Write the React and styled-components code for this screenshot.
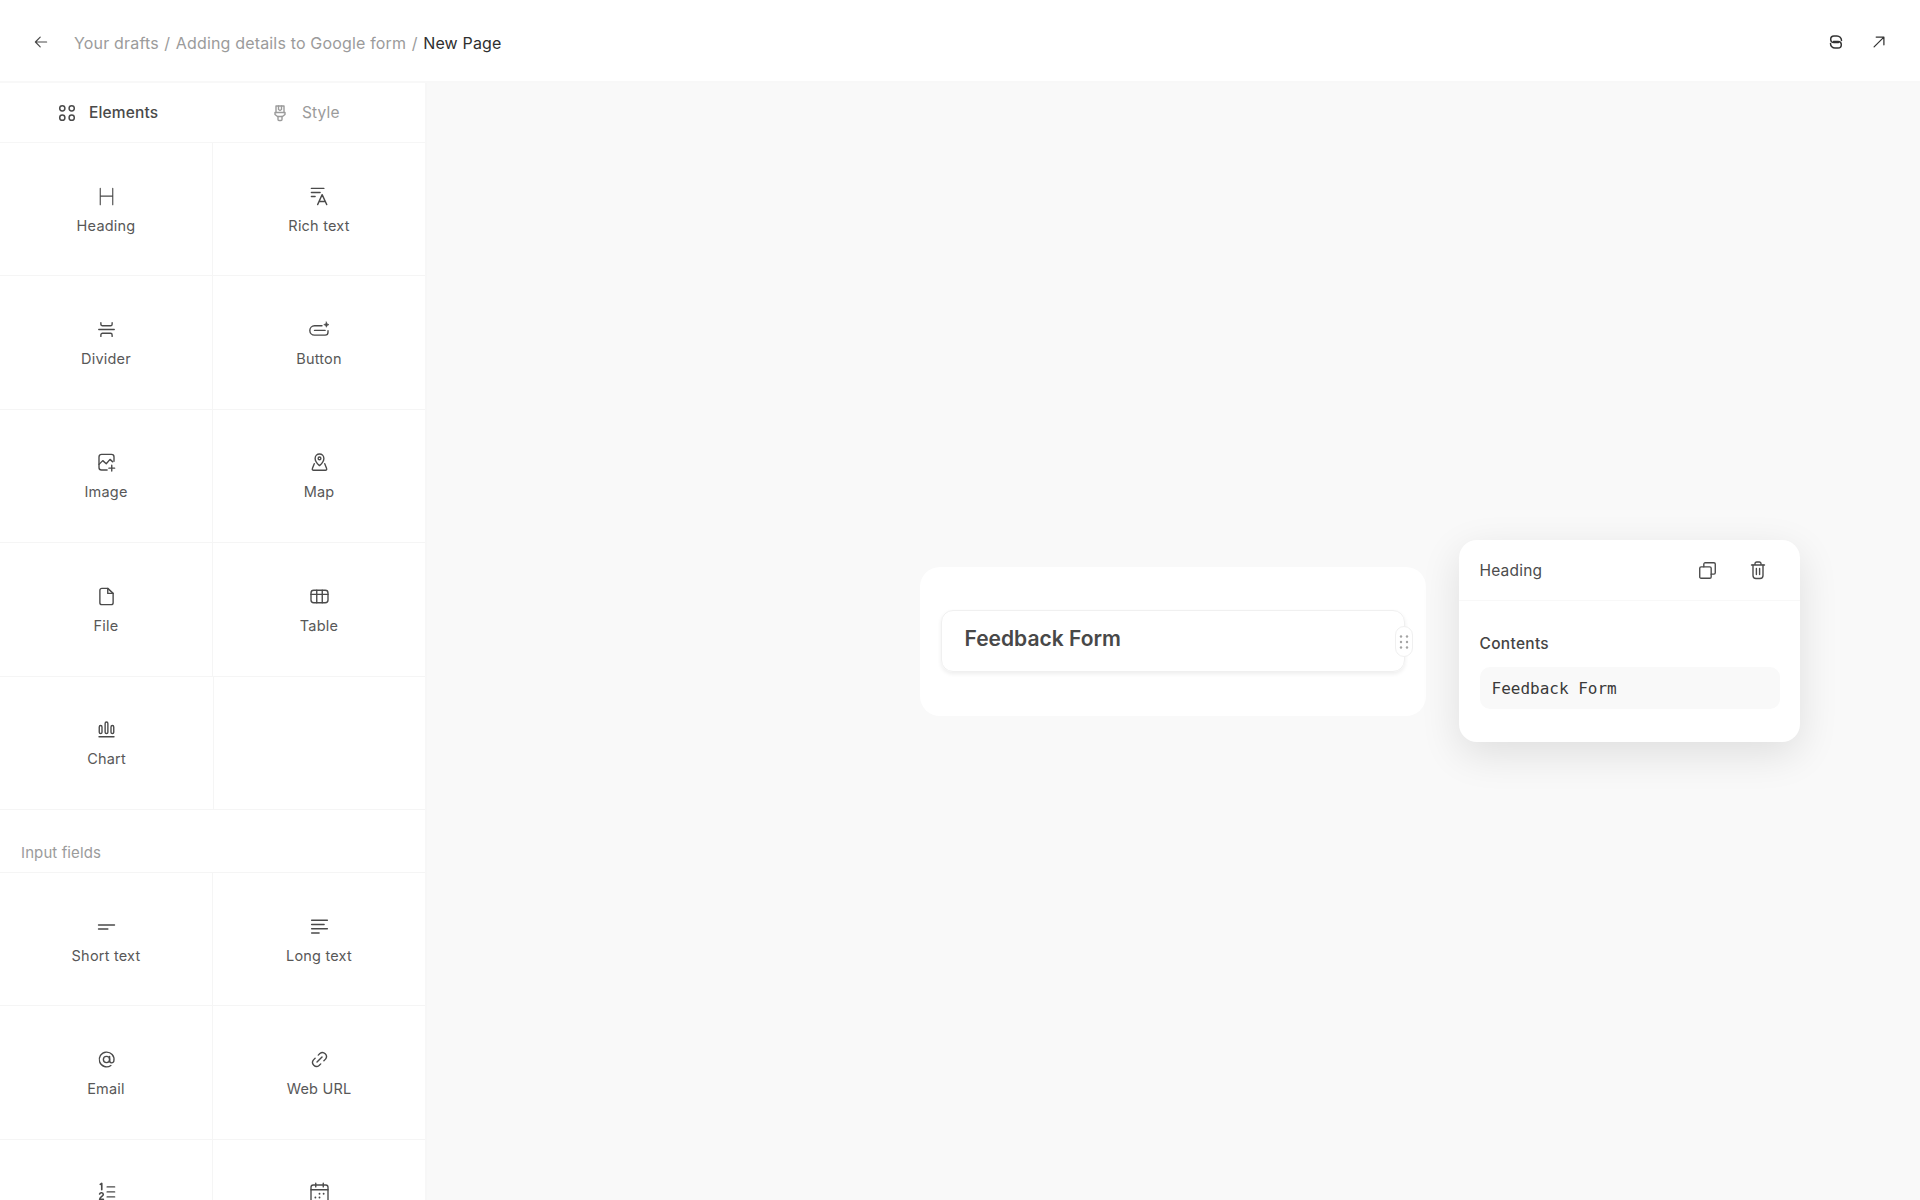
import React from 'react'
import styled, { createGlobalStyle } from 'styled-components'

const GlobalStyle = createGlobalStyle`
  html, body {
    margin: 0;
    height: 100%;
    overflow: hidden;
    background: #fff;
    font-family: Inter, "Noto Sans", sans-serif;
    -webkit-font-smoothing: antialiased;
  }
  * {
    box-sizing: border-box;
  }
`

const Page = styled.div`
  display: flex;
  flex-direction: column;
  height: 1200px;
`

const TopBar = styled.header`
  display: flex;
  align-items: center;
  justify-content: space-between;
  height: 83px;
  padding: 2px 34px 0 33px;
  border-bottom: 2px solid #f8f8f8;
`

const Crumbs = styled.nav`
  display: flex;
  align-items: center;
  gap: 5.5px;
  margin: 2px 0 0 25px;
  font-size: 16px;
  letter-spacing: 0.17px;
  color: #9b9b9b;
`

const Crumb = styled.span`
  color: ${props => (props.$current ? '#2f2f2f' : '#9b9b9b')};
`

const BarGroup = styled.div`
  display: flex;
  align-items: center;
  gap: ${props => props.$gap || 0}px;
`

const Main = styled.div`
  display: flex;
  flex: 1;
  min-height: 0;
`

const Sidebar = styled.aside`
  flex: none;
  width: 427px;
  overflow: hidden;
  border-right: 2px solid #f7f7f7;
`

const Tabs = styled.div`
  display: grid;
  grid-template-columns: 212px 1fr;
  height: 60px;
  border-bottom: 1px solid #f6f6f6;
`

const Tab = styled.div`
  display: flex;
  align-items: center;
  gap: 12px;
  padding-left: ${props => (props.$active ? 57 : 58)}px;
  font-size: 15.5px;
  letter-spacing: 0.15px;
  font-weight: ${props => (props.$active ? 500 : 400)};
  color: ${props => (props.$active ? '#4a4a4a' : '#9b9b9b')};
`

const Row = styled.div`
  display: grid;
  grid-template-columns: ${props => props.$split || 212}px 1fr;
  height: 133.4px;
  border-bottom: 1px solid #f5f5f5;
`

const Cell = styled.div`
  display: flex;
  flex-direction: column;
  align-items: center;
  justify-content: center;
  gap: 8px;
  border-left: ${props => (props.$first ? 'none' : '1px solid #f5f5f5')};
`

const TileLabel = styled.span`
  min-height: 18px;
  font-size: 14.5px;
  letter-spacing: 0.2px;
  line-height: 18px;
  color: #585858;
`

const SectionTitle = styled.div`
  display: flex;
  align-items: center;
  height: 63px;
  padding: 23px 0 0 21px;
  border-bottom: 1px solid #f5f5f5;
  font-size: 15px;
  letter-spacing: 0.1px;
  color: #9b9b9b;
`

const Canvas = styled.main`
  display: flex;
  flex: 1;
  align-items: center;
  justify-content: center;
  background: #f9f9f9;
`

const Card = styled.div`
  position: relative;
  width: 506px;
  height: 149px;
  margin-right: 2px;
  padding: 43px 21px 44px 21px;
  border-radius: 20px;
  background: #fff;
`

const HeadingBlock = styled.div`
  position: relative;
  display: flex;
  align-items: center;
  height: 62px;
  padding: 0 0 6px 23px;
  border: 1px solid #f0f0f0;
  border-radius: 12px;
  box-shadow: 0 2px 4px rgba(0, 0, 0, 0.07);
  font-size: 21px;
  font-weight: 600;
  color: #484848;
`

const Handle = styled.div`
  position: absolute;
  top: 15px;
  right: -9px;
  display: flex;
  align-items: center;
  justify-content: center;
  width: 18px;
  height: 31px;
  border: 1px solid #f0f0f0;
  border-radius: 9px;
  background: #fff;
`

const Popover = styled.section`
  position: absolute;
  top: -27px;
  left: calc(100% + 33px);
  width: 341px;
  height: 202px;
  border-radius: 18px;
  background: #fff;
  box-shadow: 0 12px 40px rgba(0, 0, 0, 0.11);
`

const PopoverHead = styled.div`
  display: flex;
  align-items: center;
  justify-content: space-between;
  height: 61px;
  padding: 0 32px 0 21px;
  border-bottom: 1px solid #f8f8f8;
  font-size: 15.5px;
  letter-spacing: 0.2px;
  color: #4c4c4c;
`

const PopoverBody = styled.div`
  padding: 33px 20px 0 21px;
`

const FieldLabel = styled.div`
  margin-bottom: 13px;
  font-size: 15.5px;
  font-weight: 500;
  letter-spacing: 0.3px;
  line-height: 20px;
  color: #444;
`

const Field = styled.div`
  display: flex;
  align-items: center;
  height: 42px;
  padding-left: 12px;
  border-radius: 10px;
  background: #f9f9f9;
  font-family: "DejaVu Sans Mono", monospace;
  font-size: 16px;
  color: #3a3a3a;
`

const Ico = ({ size = 25, sw = 1.1, color = '#4a4a4a', children }) => (
  <svg
    width={size}
    height={size}
    viewBox="0 0 20 20"
    fill="none"
    stroke={color}
    strokeWidth={sw}
    strokeLinecap="round"
    strokeLinejoin="round"
  >
    {children}
  </svg>
)

const icons = {
  heading: <path d="M5 3.500v13M15 3.500v13M5 9.700h10" strokeWidth="0.9" />,
  rich: (
    <>
      <path d="M3.500 3.500h10M3.500 6.800h7M3.500 10h3" />
      <path d="M8.500 16.500l3.600-8 3.700 8M9.800 14h4.800" />
    </>
  ),
  divider: (
    <>
      <path d="M3.800 10h12.400" />
      <path d="M5.500 4.500v1.200a1.300 1.300 0 0 0 1.300 1.300h6.400a1.300 1.300 0 0 0 1.300-1.300V4.500" />
      <path d="M5.500 15.500v-1.200a1.300 1.300 0 0 1 1.300-1.300h6.400a1.300 1.300 0 0 1 1.300 1.300v1.200" />
    </>
  ),
  button: (
    <>
      <path d="M12 7H6a3.400 3.400 0 0 0 0 7.500h8.500a2.300 2.300 0 0 0 2.300-2.300V11" />
      <path d="M6 10.700h8.500" />
      <path d="M15.500 4l.6 1.500 1.500.6-1.500.6-.6 1.500-.6-1.500-1.500-.6 1.500-.6z" fill="#4a4a4a" strokeWidth="0.5" />
    </>
  ),
  image: (
    <>
      <path d="M16 9V5.500a2 2 0 0 0-2-2H6a2 2 0 0 0-2 2v8.500a2 2 0 0 0 2 2h4.500" />
      <path d="M4 11.500l3-3 2.800 2.500 3-3.500 2.200 2" />
      <path d="M14.200 12.200v4.600M11.900 14.500h4.600" />
    </>
  ),
  map: (
    <>
      <path d="M10 12.500s-3.500-3-3.500-5.800a3.500 3.500 0 0 1 7 0c0 2.800-3.500 5.800-3.500 5.800z" />
      <circle cx="10" cy="6.700" r="1.100" />
      <path d="M5.800 11l-1.500 3.800a1 1 0 0 0 1 1.400h9.400a1 1 0 0 0 1-1.400L14.200 11" />
    </>
  ),
  file: (
    <>
      <path d="M11 3.500H6.300a1.600 1.600 0 0 0-1.600 1.600v9.800a1.600 1.600 0 0 0 1.600 1.600h7.400a1.600 1.600 0 0 0 1.600-1.600V7.500z" />
      <path d="M11 3.500v4h4.300" />
    </>
  ),
  table: (
    <>
      <rect x="3.200" y="5" width="13.600" height="10" rx="2.200" />
      <path d="M3.200 8.300h13.600M7.800 5v10M12.200 5v10" />
    </>
  ),
  chart: (
    <>
      <rect x="4.200" y="6.800" width="2.200" height="6.400" rx="1.100" />
      <rect x="8.900" y="4" width="2.200" height="9.200" rx="1.100" />
      <rect x="13.600" y="6.800" width="2.200" height="6.400" rx="1.100" />
      <path d="M4 15.800h12" />
    </>
  ),
  short: <path d="M3.600 8.800h12.800M3.600 12h7.500" />,
  long: <path d="M3.700 5h12.600M3.700 8.400h10M3.700 11.800h12.600M3.700 15.200h6" />,
  email: (
    <>
      <circle cx="10" cy="10" r="2.500" />
      <path d="M12.500 7.500v3.300a1.700 1.700 0 0 0 3.400.300A5.900 5.900 0 1 0 13.500 14.800" />
    </>
  ),
  url: (
    <>
      <path d="M9 6.500l1.300-1.300a3.200 3.200 0 0 1 4.500 4.500l-1.300 1.300" />
      <path d="M11 13.500l-1.300 1.300a3.200 3.200 0 0 1-4.500-4.500l1.300-1.300" />
      <path d="M8 12l4-4" />
    </>
  ),
  list: (
    <>
      <path d="M10.500 5.500h6M10.500 9.500h6M10.500 13.500h6" />
      <path d="M5 3.500l1.200-.8v5" strokeWidth="1.300" />
      <path d="M4.500 11.200a1.500 1.500 0 0 1 2.900.5c0 1-2.900 2.200-2.900 3.800h3" strokeWidth="1.300" />
    </>
  ),
  calendar: (
    <>
      <rect x="3.200" y="4" width="13.600" height="13.500" rx="1.800" />
      <path d="M3.200 7.800h13.600M7 2.500v3M13 2.500v3" />
      <path d="M10 11h.01M13.300 11h.01M6.700 14h.01M10 14h.01" strokeWidth="1.500" />
    </>
  ),
}

const BackIcon = () => (
  <Ico size={16} sw={1.5}>
    <path d="M17 10H3.500M9 4l-6 6 6 6" />
  </Ico>
)

const ElementsIcon = () => (
  <Ico size={20} sw={1.5}>
    <circle cx="5.300" cy="5.300" r="2.600" />
    <circle cx="14.700" cy="5.300" r="2.600" />
    <circle cx="5.300" cy="14.700" r="2.600" />
    <circle cx="14.700" cy="14.700" r="2.600" />
  </Ico>
)

const StyleIcon = () => (
  <Ico size={20} color="#9b9b9b" sw={1.4}>
    <path d="M6 9.500V3h8v6.500" />
    <path d="M8.500 3v3.500l1.500 1 1.500-1V3" />
    <path d="M5 9.500h10v2l-2.500 2h-5L5 11.500z" />
    <path d="M8 13.500v3a1 1 0 0 0 1 1h2a1 1 0 0 0 1-1v-3" />
  </Ico>
)

const SpiralIcon = () => (
  <Ico size={20} sw={1.5} color="#333">
    <path d="M12.500 10.500H8a3.300 3.300 0 0 1 0-6.600h3a4.500 4.500 0 0 1 4.500 4.500" />
    <path d="M7.500 9.500H12a3.300 3.300 0 0 1 0 6.600H9a4.500 4.500 0 0 1-4.500-4.500" />
  </Ico>
)

const OpenIcon = () => (
  <Ico size={14} color="#333" sw={1.8}>
    <path d="M3 17L17 3M6 3h11v11" />
  </Ico>
)

const CopyIcon = () => (
  <Ico size={21} sw={1.3}>
    <rect x="2.600" y="6.500" width="10.900" height="10.900" rx="1.300" />
    <path d="M6.500 6.500V3.900a1.300 1.300 0 0 1 1.300-1.300h8.300a1.300 1.300 0 0 1 1.300 1.300v8.300a1.300 1.300 0 0 1-1.300 1.300h-2.600" />
  </Ico>
)

const TrashIcon = () => (
  <Ico size={20} sw={1.4}>
    <path d="M3.500 5h13M7 5V3.700A1.700 1.700 0 0 1 8.700 2h2.600A1.700 1.700 0 0 1 13 3.700V5" />
    <path d="M5 5v10.500a3 3 0 0 0 3 3h4a3 3 0 0 0 3-3V5" />
    <path d="M8.400 8.500v6M11.600 8.500v6" />
  </Ico>
)

const GripIcon = () => (
  <svg width="10" height="14" viewBox="0 0 10 14" fill="#a4a4a4">
    <circle cx="2" cy="1.500" r="1.200" />
    <circle cx="8" cy="1.500" r="1.200" />
    <circle cx="2" cy="7" r="1.200" />
    <circle cx="8" cy="7" r="1.200" />
    <circle cx="2" cy="12.500" r="1.200" />
    <circle cx="8" cy="12.500" r="1.200" />
  </svg>
)

const Tile = ({ icon, label, first }) => (
  <Cell $first={first}>
    <Ico>{icons[icon]}</Ico>
    <TileLabel>{label}</TileLabel>
  </Cell>
)

const layoutRows = [
  [['heading', 'Heading'], ['rich', 'Rich text']],
  [['divider', 'Divider'], ['button', 'Button']],
  [['image', 'Image'], ['map', 'Map']],
  [['file', 'File'], ['table', 'Table']],
]

// last row runs off the bottom of the window, only its icons show
const inputRows = [
  [['short', 'Short text'], ['long', 'Long text']],
  [['email', 'Email'], ['url', 'Web URL']],
  [['list'], ['calendar']],
]

const TileRow = ({ tiles }) => (
  <Row>
    <Tile first icon={tiles[0][0]} label={tiles[0][1]} />
    <Tile icon={tiles[1][0]} label={tiles[1][1]} />
  </Row>
)

export default function App() {
  return (
    <Page>
      <GlobalStyle />
      <TopBar>
        <BarGroup>
          <BackIcon />
          <Crumbs>
            <Crumb>Your drafts</Crumb>
            <span>/</span>
            <Crumb>Adding details to Google form</Crumb>
            <span>/</span>
            <Crumb $current>New Page</Crumb>
          </Crumbs>
        </BarGroup>
        <BarGroup $gap={26}>
          <SpiralIcon />
          <OpenIcon />
        </BarGroup>
      </TopBar>
      <Main>
        <Sidebar>
          <Tabs>
            <Tab $active>
              <ElementsIcon />
              Elements
            </Tab>
            <Tab>
              <StyleIcon />
              Style
            </Tab>
          </Tabs>
          {layoutRows.map(tiles => (
            <TileRow key={tiles[0][1]} tiles={tiles} />
          ))}
          <Row $split={213}>
            <Tile first icon="chart" label="Chart" />
            <Cell />
          </Row>
          <SectionTitle>Input fields</SectionTitle>
          {inputRows.map(tiles => (
            <TileRow key={tiles[0][0]} tiles={tiles} />
          ))}
        </Sidebar>
        <Canvas>
          <Card>
            <HeadingBlock>
              Feedback Form
              <Handle>
                <GripIcon />
              </Handle>
            </HeadingBlock>
            <Popover>
              <PopoverHead>
                Heading
                <BarGroup $gap={30}>
                  <CopyIcon />
                  <TrashIcon />
                </BarGroup>
              </PopoverHead>
              <PopoverBody>
                <FieldLabel>Contents</FieldLabel>
                <Field>Feedback Form</Field>
              </PopoverBody>
            </Popover>
          </Card>
        </Canvas>
      </Main>
    </Page>
  )
}
